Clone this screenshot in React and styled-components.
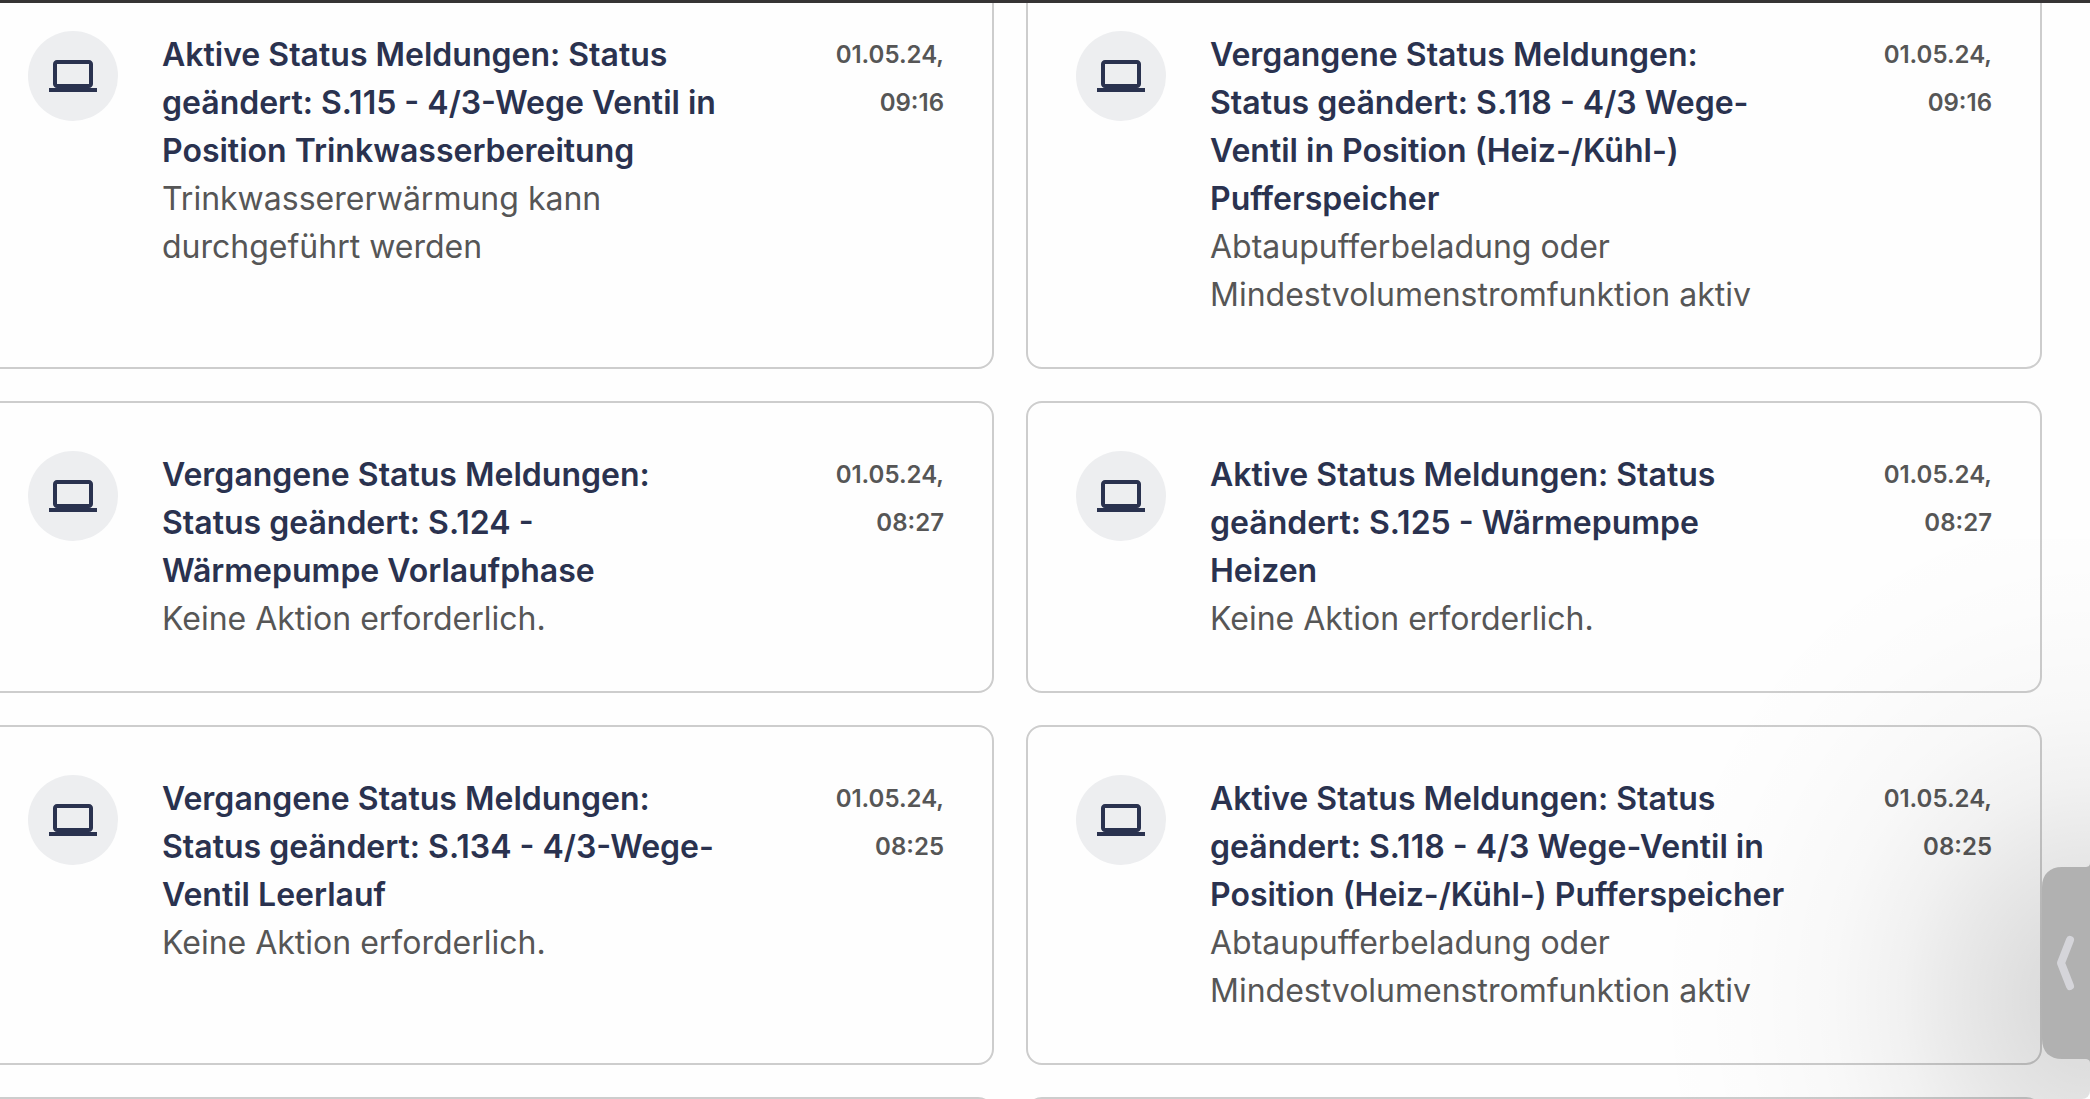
import styled, { createGlobalStyle } from "styled-components";

const messages = [
  {
    id: 1,
    title:
      "Aktive Status Meldungen: Status geändert: S.115 - 4/3-Wege Ventil in Position Trinkwasserbereitung",
    text: "Trinkwassererwärmung kann durchgeführt werden",
    date: "01.05.24, 09:16",
  },
  {
    id: 2,
    title:
      "Vergangene Status Meldungen: Status geändert: S.118 - 4/3 Wege-Ventil in Position (Heiz-/Kühl-) Pufferspeicher",
    text: "Abtaupufferbeladung oder Mindestvolumenstromfunktion aktiv",
    date: "01.05.24, 09:16",
  },
  {
    id: 3,
    title:
      "Vergangene Status Meldungen: Status geändert: S.124 - Wärmepumpe Vorlaufphase",
    text: "Keine Aktion erforderlich.",
    date: "01.05.24, 08:27",
  },
  {
    id: 4,
    title:
      "Aktive Status Meldungen: Status geändert: S.125 - Wärmepumpe Heizen",
    text: "Keine Aktion erforderlich.",
    date: "01.05.24, 08:27",
  },
  {
    id: 5,
    title:
      "Vergangene Status Meldungen: Status geändert: S.134 - 4/3-Wege-Ventil Leerlauf",
    text: "Keine Aktion erforderlich.",
    date: "01.05.24, 08:25",
  },
  {
    id: 6,
    title:
      "Aktive Status Meldungen: Status geändert: S.118 - 4/3 Wege-Ventil in Position (Heiz-/Kühl-) Pufferspeicher",
    text: "Abtaupufferbeladung oder Mindestvolumenstromfunktion aktiv",
    date: "01.05.24, 08:25",
  },
];

const LaptopIcon = () => (
  <svg width="48" height="48" viewBox="0 0 24 24" aria-hidden="true">
    <path
      fill="currentColor"
      d="M20 18c1.1 0 2-.9 2-2V6c0-1.1-.9-2-2-2H4c-1.1 0-2 .9-2 2v10c0 1.1.9 2 2 2H0v2h24v-2h-4zM4 6h16v10H4V6z"
    />
  </svg>
);

const Message = ({ title, text, date }) => (
  <Card>
    <IconCircle>
      <LaptopIcon />
    </IconCircle>
    <Content>
      <Title>{title}</Title>
      <Description>{text}</Description>
    </Content>
    <Timestamp>{date}</Timestamp>
  </Card>
);

const App = () => {
  return (
    <Page>
      <GlobalStyle />
      <TopBar />
      <Main>
        <MessageGrid>
          {messages.map((message) => (
            <Message key={message.id} {...message} />
          ))}
          <Card aria-hidden="true" />
          <Card aria-hidden="true" />
        </MessageGrid>
      </Main>
      <Shade />
      <DrawerHandle type="button" aria-label="Seitenleiste öffnen">
        <svg width="48" height="200" viewBox="0 0 48 200" aria-hidden="true">
          <path
            fill="#b1b1b1"
            d="M48 0C48 3 46 4 43 4H20C8 4 0 11 0 24V176C0 189 8 196 20 196H43C46 196 48 197 48 200Z"
          />
          <path
            d="M28 77L19 100L28 123"
            fill="none"
            stroke="#d5d5da"
            strokeWidth="8"
            strokeLinecap="round"
            strokeLinejoin="round"
          />
        </svg>
      </DrawerHandle>
    </Page>
  );
};

export default App;

const GlobalStyle = createGlobalStyle`
  * {
    box-sizing: border-box;
  }

  body {
    margin: 0;
    background: #fefefe;
    font-family: Inter, "Liberation Sans", sans-serif;
  }
`;

const Page = styled.div`
  position: relative;
  display: flex;
  flex-direction: column;
  height: 100vh;
  overflow: hidden;
`;

const TopBar = styled.header`
  flex: none;
  height: 3px;
  background: #363435;
`;

const Main = styled.main`
  flex: 1;
  min-height: 0;
  overflow: hidden;
`;

const MessageGrid = styled.div`
  display: grid;
  grid-template-columns: repeat(2, 1fr);
  gap: 32px;
  margin: -22px 48px 0 -22px;
`;

const Card = styled.article`
  display: flex;
  align-items: flex-start;
  padding: 48px;
  border: 2px solid #cdcdcd;
  border-radius: 16px;
`;

const IconCircle = styled.div`
  flex: none;
  display: flex;
  align-items: center;
  justify-content: center;
  width: 90px;
  height: 90px;
  border-radius: 50%;
  background: #edeef0;
  color: #2a324f;
`;

const Content = styled.div`
  flex: 1;
  min-width: 0;
  margin: 0 40px 0 44px;
  font-size: 32px;
  line-height: 48px;
`;

const Title = styled.h2`
  margin: 0;
  color: #2a324f;
  font-size: inherit;
  font-weight: 600;
`;

const Description = styled.p`
  margin: 0;
  color: #565656;
  font-weight: 400;
`;

const Timestamp = styled.time`
  flex: none;
  width: 160px;
  color: #565656;
  font-size: 24px;
  font-weight: 600;
  line-height: 48px;
  text-align: right;
`;

const Shade = styled.div`
  position: absolute;
  right: 0;
  bottom: 0;
  width: 460px;
  height: 560px;
  border-bottom-right-radius: 8px;
  pointer-events: none;
  background: radial-gradient(
    440px 500px at 100% 82%,
    rgba(0, 0, 0, 0.15) 0%,
    rgba(0, 0, 0, 0.125) 14%,
    rgba(0, 0, 0, 0.085) 30%,
    rgba(0, 0, 0, 0.05) 43%,
    rgba(0, 0, 0, 0.025) 59%,
    rgba(0, 0, 0, 0.008) 80%,
    rgba(0, 0, 0, 0) 100%
  );
`;

const DrawerHandle = styled.button`
  position: absolute;
  right: 0;
  bottom: 36px;
  width: 48px;
  height: 200px;
  padding: 0;
  border: 0;
  background: none;
  cursor: pointer;

  svg {
    display: block;
  }
`;
